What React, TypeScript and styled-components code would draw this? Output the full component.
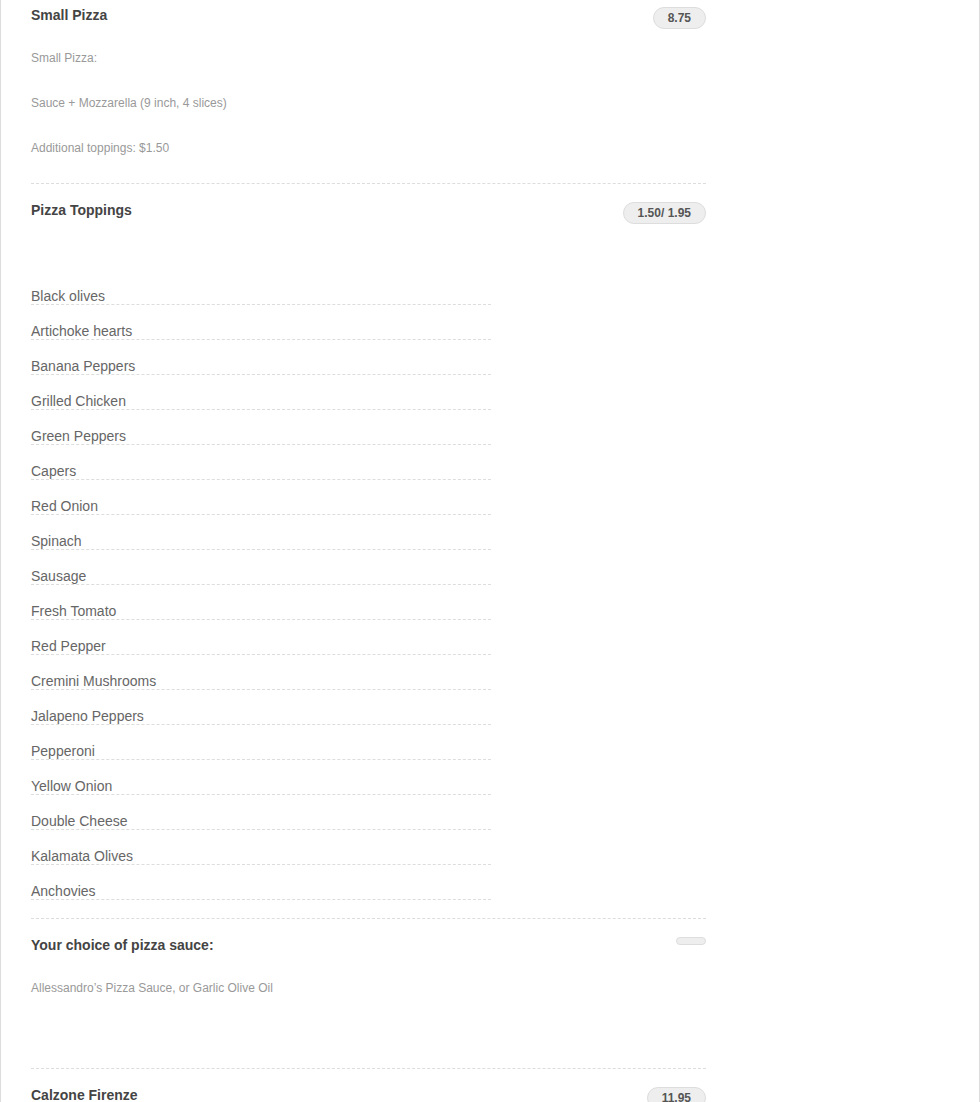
import styled, { createGlobalStyle } from 'styled-components';

const GlobalStyle = createGlobalStyle`
  html, body {
    margin: 0;
    padding: 0;
    background: #fff;
  }
  body {
    font-family: "Liberation Sans", Arial, Helvetica, sans-serif;
  }
`;

const toppings = [
  'Black olives',
  'Artichoke hearts',
  'Banana Peppers',
  'Grilled Chicken',
  'Green Peppers',
  'Capers',
  'Red Onion',
  'Spinach',
  'Sausage',
  'Fresh Tomato',
  'Red Pepper',
  'Cremini Mushrooms',
  'Jalapeno Peppers',
  'Pepperoni',
  'Yellow Onion',
  'Double Cheese',
  'Kalamata Olives',
  'Anchovies',
];

const App = () => (
  <>
    <GlobalStyle />
    <Page>
      <Menu>
        <Item $first>
          <ItemHeader>
            <ItemTitle>Small Pizza</ItemTitle>
            <Price>8.75</Price>
          </ItemHeader>
          <Description>
            <p>Small Pizza:</p>
            <p>Sauce + Mozzarella (9 inch, 4 slices)</p>
            <p>Additional toppings: $1.50</p>
          </Description>
        </Item>

        <Item>
          <ItemHeader>
            <ItemTitle>Pizza Toppings</ItemTitle>
            <Price>1.50/ 1.95</Price>
          </ItemHeader>
          <ToppingList>
            {toppings.map((t) => (
              <Topping key={t}>{t}</Topping>
            ))}
          </ToppingList>
        </Item>

        <Item>
          <ItemHeader>
            <ItemTitle>Your choice of pizza sauce:</ItemTitle>
            <Price />
          </ItemHeader>
          <Description>
            <p>Allessandro’s Pizza Sauce, or Garlic Olive Oil</p>
            <p>&nbsp;</p>
          </Description>
        </Item>

        <Item>
          <ItemHeader>
            <ItemTitle>Calzone Firenze</ItemTitle>
            <Price>11.95</Price>
          </ItemHeader>
        </Item>
      </Menu>
    </Page>
  </>
);

const Page = styled.div`
  box-sizing: border-box;
  width: 980px;
  height: 1102px;
  overflow: hidden;
  border-left: 1px solid #ddd;
  border-right: 1px solid #ddd;
  padding: 0 30px;
  display: grid;
  grid-template-columns: 675px 1fr;
`;

const Menu = styled.div`
  display: flex;
  flex-direction: column;
`;

const Item = styled.div<{ $first?: boolean }>`
  padding-top: ${(p) => (p.$first ? '5px' : '16px')};
  border-bottom: 1px dashed #ddd;
  &:last-child {
    border-bottom: none;
  }
`;

const ItemHeader = styled.div`
  display: flex;
  justify-content: space-between;
  align-items: flex-start;
  height: 20px;
`;

const ItemTitle = styled.h3`
  margin: 0;
  font-size: 14px;
  line-height: 20px;
  font-weight: bold;
  color: #444;
`;

const Price = styled.span`
  margin-top: 2px;
  padding: 3px 14px;
  border: 1px solid #ddd;
  border-radius: 11px;
  background: #eee;
  color: #555;
  font-size: 12px;
  font-weight: bold;
  line-height: 14px;
  &:empty {
    width: 0;
    height: 0;
  }
`;

const Description = styled.div`
  display: flex;
  flex-direction: column;
  gap: 30px;
  margin: 26px 0 27px;

  p {
    margin: 0;
    font-size: 12px;
    line-height: 15px;
    color: #999;
  }
`;

const ToppingList = styled.ul`
  list-style: none;
  margin: 68px 0 18px;
  padding: 0;
  width: 460px;
`;

const Topping = styled.li`
  padding-top: 18px;
  font-size: 14px;
  line-height: 16px;
  color: #666;
  border-bottom: 1px dashed #ddd;
  &:first-child {
    padding-top: 0;
  }
`;

export default App;
